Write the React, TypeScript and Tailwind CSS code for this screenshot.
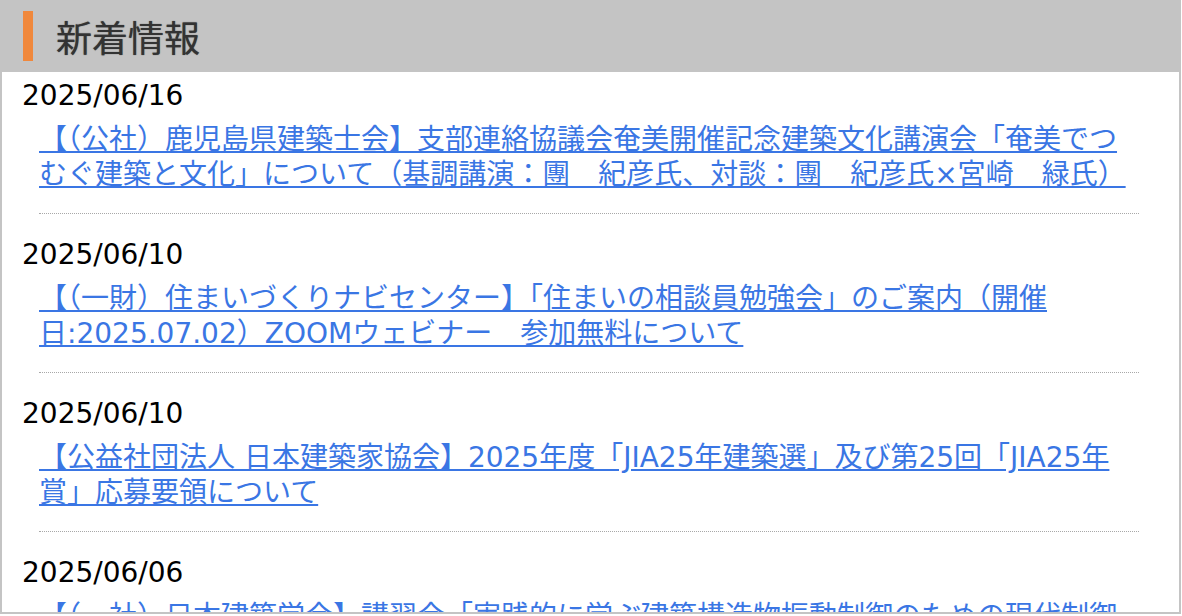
const NEWS = [
	{
		date: "2025/06/16",
		title:
			"【（公社）鹿児島県建築士会】支部連絡協議会奄美開催記念建築文化講演会「奄美でつむぐ建築と文化」について（基調講演：團　紀彦氏、対談：團　紀彦氏×宮崎　緑氏）",
	},
	{
		date: "2025/06/10",
		title:
			"【（一財）住まいづくりナビセンター】「住まいの相談員勉強会」のご案内（開催日:2025.07.02）ZOOMウェビナー　参加無料について",
	},
	{
		date: "2025/06/10",
		title:
			"【公益社団法人 日本建築家協会】2025年度「JIA25年建築選」及び第25回「JIA25年賞」応募要領について",
	},
	{
		date: "2025/06/06",
		title:
			"【（一社）日本建築学会】講習会「実践的に学ぶ建築構造物振動制御のための現代制御理論」のご案内",
	},
];

export default function App() {
	return (
		<div className="h-[614px] w-[1181px] overflow-hidden border-2 border-t-0 border-[#c4c4c4] bg-white">
			<h2 className="flex h-[72px] items-center bg-[#c4c4c4] pl-[21px]">
				<span className="h-[50px] w-[10px] bg-[#f0883c]" />
				<span className="ml-[23px] font-['Noto_Sans_CJK_JP',sans-serif] text-[36px] leading-none text-[#333] [text-shadow:0_0_1px_#444]">
					新着情報
				</span>
			</h2>
			<ul className="pt-[7px] pl-5">
				{NEWS.map((item, i) => (
					<li key={i} className="mb-[24px]">
						<p className="font-['DejaVu_Sans','Noto_Sans_CJK_JP',sans-serif] text-[28px] leading-[34px] text-black">
							{item.date}
						</p>
						<p className="mt-[9px] ml-[17px] w-[1100px] border-b border-dotted border-[#a8a8a8] pb-[21px] font-['DejaVu_Sans','Noto_Sans_CJK_JP',sans-serif] text-[28px] leading-[35px]">
							<a href="#" className="text-[#3a76e4] underline">
								{item.title}
							</a>
						</p>
					</li>
				))}
			</ul>
		</div>
	);
}
